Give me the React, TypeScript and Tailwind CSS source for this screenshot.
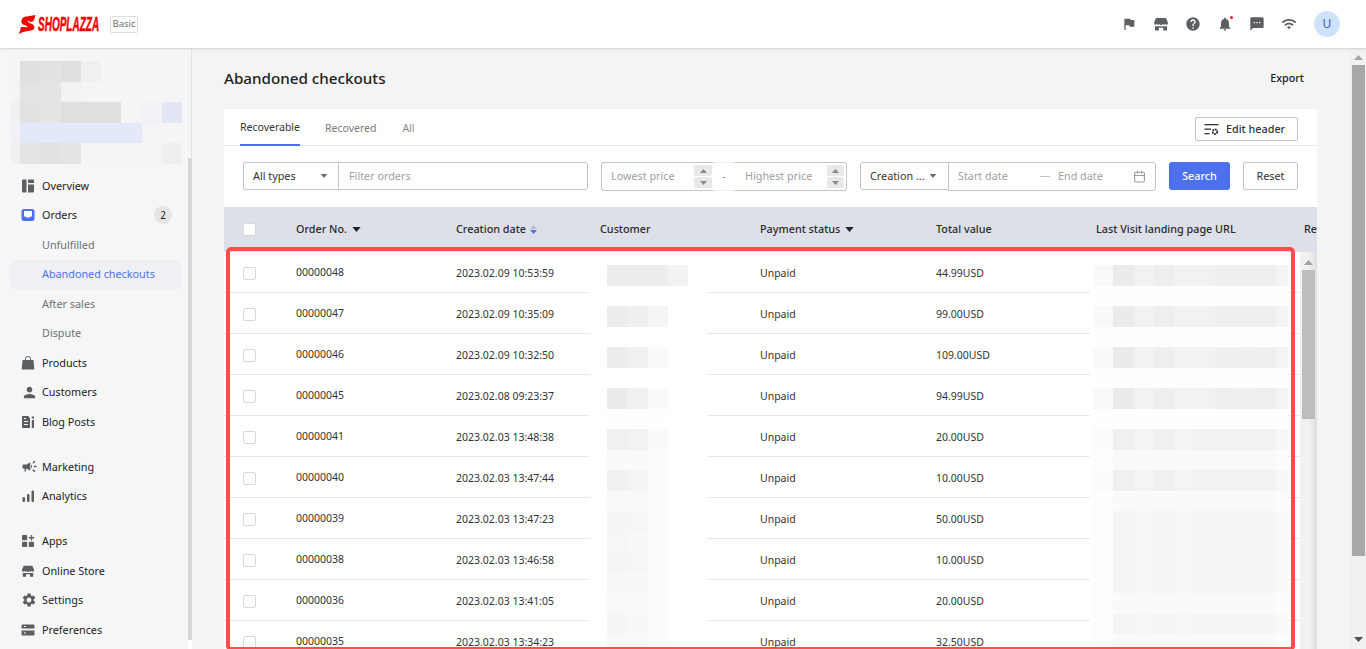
import { Calendar } from "lucide-react";
import { MdFlag, MdHelp, MdNotifications, MdSms, MdWifi, MdPerson, MdCampaign, MdSettings } from "react-icons/md";

const Store = ({ size = 16 }: { size?: number }) => (
  <svg width={size} height={size} viewBox="0 0 16 16" fill="currentColor">
    <path d="M3 2h10l1.800 4.200v1.600a1.400 1.400 0 0 1-2.700 0 1.400 1.400 0 0 1-2.700 0 1.400 1.400 0 0 1-2.800 0 1.400 1.400 0 0 1-2.700 0 1.400 1.400 0 0 1-2.700 0V6.200z" />
    <path d="M2 10.200h3.800V14.500H2zM10.200 10.200H14V14.500h-3.800zM5.800 10.200h4.400v1.600H5.800z" />
  </svg>
);
const Overview = () => (
  <svg width="14" height="14" viewBox="0 0 14 14" fill="currentColor">
    <path d="M1 1.500a1 1 0 0 1 1-1h3.500v13H2a1 1 0 0 1-1-1zM7 .5h5a1 1 0 0 1 1 1V4H7zM7 5.500h6v7a1 1 0 0 1-1 1H7z" />
  </svg>
);
const OrdersIcon = () => (
  <svg width="14" height="14" viewBox="0 0 14 14">
    <rect x="0.500" y="1" width="13" height="12" rx="2.500" fill="#4d71ee" />
    <path d="M3 3h8v5.500H9.500L8.500 9.500h-3L4.500 8.500H3z" fill="#fff" />
  </svg>
);
const Bag = () => (
  <svg width="14" height="14" viewBox="0 0 14 14" fill="currentColor">
    <path d="M1.500 4h11l.8 9.500H.7z" />
    <path d="M4.500 5V2.500a2.500 2 0 0 1 5 0V5" fill="none" stroke="currentColor" />
  </svg>
);
const Blog = () => (
  <svg width="14" height="14" viewBox="0 0 14 14" fill="currentColor">
    <path fillRule="evenodd" d="M1 1h6l2 2v10H1zM3 6v1h4V6zM3 9v1h4V9zM3 3v1h2V3z" />
    <path d="M10.800 5H13v8h-2.200zM10.800 1.500H13v2h-2.200z" />
  </svg>
);
const Bars = () => (
  <svg width="14" height="14" viewBox="0 0 14 14" fill="currentColor">
    <rect x="1.500" y="8" width="2.500" height="5" rx="1" />
    <rect x="6" y="5" width="2.500" height="8" rx="1" />
    <rect x="10.500" y="1.500" width="2.500" height="11.500" rx="1" />
  </svg>
);
const Apps = () => (
  <svg width="14" height="14" viewBox="0 0 14 14" fill="currentColor">
    <rect x="1" y="1" width="5.200" height="5.200" rx="1" />
    <rect x="1" y="7.800" width="5.200" height="5.200" rx="1" />
    <rect x="7.800" y="7.800" width="5.200" height="5.200" rx="1" />
    <path d="M9.800 1h1.400v2h2v1.400h-2v2H9.800v-2h-2V3h2z" />
  </svg>
);
const Prefs = () => (
  <svg width="14" height="14" viewBox="0 0 14 14" fill="currentColor">
    <path fillRule="evenodd" d="M1.500 1.500h11a1 1 0 0 1 1 1v3h-13v-3a1 1 0 0 1 1-1zM.5 7.500h13v4a1 1 0 0 1-1 1h-11a1 1 0 0 1-1-1z" />
    <path d="M3 3h2v1H3zM3 9.500h2v1H3z" fill="#f6f6f6" />
  </svg>
);
const EditIcon = () => (
  <svg width="15" height="13" viewBox="0 0 15 13" fill="#333">
    <rect x="0.500" y="1" width="14" height="1.300" />
    <rect x="0.500" y="5.500" width="6.500" height="1.300" />
    <rect x="0.500" y="10" width="5" height="1.300" />
    <circle cx="11" cy="8.700" r="2.300" fill="none" stroke="#333" strokeWidth="1.800" strokeDasharray="1.800 .6" />
  </svg>
);

const Caret = ({ className }: { className: string }) => (
  <svg width="10" height="6" viewBox="0 0 10 6" className={className} fill="currentColor">
    <path d="M0 0h10L5 6z" />
  </svg>
);
const Up = ({ className }: { className: string }) => (
  <svg width="9" height="5" viewBox="0 0 9 5" className={className} fill="currentColor">
    <path d="M4.500 0L9 5H0z" />
  </svg>
);
const Down = ({ className }: { className: string }) => (
  <svg width="9" height="5" viewBox="0 0 9 5" className={className} fill="currentColor">
    <path d="M0 0h9L4.500 5z" />
  </svg>
);

interface NavProps {
  icon?: JSX.Element;
  label: string;
  sub?: boolean;
  active?: boolean;
  badge?: string;
}

const navGroups: NavProps[][] = [
  [
    { icon: <Overview />, label: "Overview" },
    { icon: <OrdersIcon />, label: "Orders", badge: "2" },
    { label: "Unfulfilled", sub: true },
    { label: "Abandoned checkouts", sub: true, active: true },
    { label: "After sales", sub: true },
    { label: "Dispute", sub: true },
    { icon: <Bag />, label: "Products" },
    { icon: <MdPerson size={17} />, label: "Customers" },
    { icon: <Blog />, label: "Blog Posts" },
  ],
  [
    { icon: <MdCampaign size={17} />, label: "Marketing" },
    { icon: <Bars />, label: "Analytics" },
  ],
  [
    { icon: <Apps />, label: "Apps" },
    { icon: <Store size={14} />, label: "Online Store" },
    { icon: <MdSettings size={16} />, label: "Settings" },
    { icon: <Prefs />, label: "Preferences" },
  ],
];

const orders = [
  ["00000048", "2023.02.09 10:53:59", "44.99USD"],
  ["00000047", "2023.02.09 10:35:09", "99.00USD"],
  ["00000046", "2023.02.09 10:32:50", "109.00USD"],
  ["00000045", "2023.02.08 09:23:37", "94.99USD"],
  ["00000041", "2023.02.03 13:48:38", "20.00USD"],
  ["00000040", "2023.02.03 13:47:44", "10.00USD"],
  ["00000039", "2023.02.03 13:47:23", "50.00USD"],
  ["00000038", "2023.02.03 13:46:58", "10.00USD"],
  ["00000036", "2023.02.03 13:41:05", "20.00USD"],
  ["00000035", "2023.02.03 13:34:23", "32.50USD"],
];

// pixelated areas of the screenshot, one array per band of tiles
const sideTiles = [
  ["#f5f5f5", "#dfdfdf", "#e1e2e2", "#e0e0e0", "#f0f0f0", "#f5f5f5", "#f5f5f5", "#f5f5f5", "#f5f5f5"],
  ["#f5f5f5", "#e3e3e3", "#e4e4e4", "#f1f2f4", "#f5f5f5", "#f5f5f5", "#f5f5f5", "#f5f5f5", "#f5f5f5"],
  ["#f0f0f0", "#e2e2e2", "#e4e4e4", "#dfdfdf", "#dfdfdf", "#dfdfdf", "#f5f5f5", "#f2f2f6", "#e3e6f4"],
  ["#f0f2f8", "#e3e9f8", "#e3e9f8", "#e3e9f8", "#e3e9f8", "#e3e9f8", "#e3e9f8", "#f3f4f6", "#f5f5f5"],
  ["#f0f0f0", "#e4e4e4", "#e2e2e2", "#e4e4e4", "#f5f5f5", "#f5f5f5", "#f5f5f5", "#f5f5f5", "#efefef"],
];
const customerTiles = [
  ["#ececec", "#ededed", "#ededed", "#f3f3f3"],
  ["#fff", "#fff", "#fff"],
  ["#ececee", "#efefef", "#f5f5f5"],
  ["#fff", "#fff", "#fff"],
  ["#ececec", "#eff0f0", "#fafafa"],
  ["#fff", "#fff", "#fff"],
  ["#ebebeb", "#eff0f0", "#fafafa"],
  ["#fefefe", "#fefefe", "#fefefe"],
  ["#f0f0f0", "#f2f2f2", "#fafafa"],
  ["#fafafa", "#fafafa", "#fcfcfc"],
  ["#f1f1f1", "#f3f5f4", "#fbfcfb"],
  ["#f9f9f9", "#f9f9f9", "#fcfcfc"],
  ["#f5f5f5", "#f6f6f6", "#fcfcfc"],
  ["#f6f6f6", "#f8f8f8", "#fcfcfc"],
  ["#f5f5f5", "#f6f6f6", "#fcfcfc"],
  ["#f7f7f7", "#f8f8f8", "#fcfcfc"],
  ["#f9f9f9", "#f9f9f9", "#fcfcfc"],
  ["#f5f5f5", "#f7f8f7", "#fcfcfc"],
  ["#f9f9f9", "#f9f9f9", "#fcfcfc"],
];
const urlDark = ["#f9f9f9", "#ebebeb", "#f1f3f1", "#eeeeee", "#f1f2f4", "#f1f2f4", "#eeeeee", "#efefef", "#eeeeee", "#f4f4f4"];
const urlMid = ["#fbfbfb", "#f0f0f0", "#f3f5f4", "#f0f0f0", "#f3f4f6", "#f2f2f2", "#f2f2f2", "#f2f2f2", "#f2f2f2", "#f7f7f7"];
const urlFaint = ["#fdfdfd", "#f5f5f5", "#f7f7f7", "#f5f5f5", "#f6f6f6", "#f5f5f5", "#f5f5f5", "#f5f5f5", "#f5f5f5", "#f9f9f9"];
const urlPale = ["#fdfdfd", "#fafafa", "#fafafa", "#fafafa", "#fafafa", "#fafafa", "#fafafa", "#fafafa", "#fafafa", "#fcfcfc"];
const urlWhite = Array(10).fill("#fefefe");
const urlTiles = [
  urlDark, urlWhite, urlDark, urlWhite, urlDark, urlWhite, urlDark, urlWhite, urlMid, urlPale,
  urlMid, urlPale, urlFaint, urlFaint, urlFaint, urlFaint, urlPale, urlFaint, urlPale,
];

const Tiles = ({ bands, first = 20.300 }: { bands: string[][]; first?: number }) => (
  <div className="flex flex-col">
    {bands.map((band, i) => (
      <div key={i} className="flex h-[20.500px]">
        {band.map((color, j) => (
          <div
            key={j}
            className="shrink-0"
            style={{ backgroundColor: color, width: j === 0 ? first : j === 9 ? 12 : 20.300 }}
          />
        ))}
      </div>
    ))}
  </div>
);

const Sidebar = () => (
  <aside className="flex w-[192px] shrink-0 bg-[#f6f6f6]">
    <div className="w-[188px] shrink-0 pt-[13px]">
      <div className="mb-[7.500px] ml-[11px]">
        <Tiles bands={sideTiles} first={9} />
      </div>
      {navGroups.map((group, g) => (
        <div key={g} className="mb-[15.500px]">
          {group.map(({ icon, label, sub, active, badge }) => (
            <div
              key={label}
              className={`ml-[10px] mr-[7px] flex h-[29.500px] items-center rounded-[4px] pl-[11px] pr-[9px] ${active ? "bg-[#eff0f3]" : ""}`}
            >
              <span className="flex w-[21px] shrink-0 items-center text-[#5c5f62]">{icon}</span>
              <span className={active ? "text-[#4d71ee]" : sub ? "text-[#6d7175]" : "text-[#202223]"}>{label}</span>
              {badge && (
                <span className="ml-auto flex h-[18px] w-[18px] items-center justify-center rounded-full bg-[#e4e5e7] text-[10px] text-[#202223]">
                  {badge}
                </span>
              )}
            </div>
          ))}
        </div>
      ))}
    </div>
    <div className="flex w-[4px] shrink-0 flex-col">
      <div className="h-[110px] border-r border-[#e3e3e3]" />
      <div className="flex-1 bg-[#d5d7da]" />
      <div className="h-[9px] bg-white" />
    </div>
  </aside>
);

const columns = [
  { label: "Order No.", w: "w-[160px]", filter: true },
  { label: "Creation date", w: "w-[144px]", sort: true },
  { label: "Customer", w: "w-[160px]" },
  { label: "Payment status", w: "w-[176px]", filter: true },
  { label: "Total value", w: "w-[160px]" },
  { label: "Last Visit landing page URL", w: "w-[208px]" },
  { label: "Recovery", w: "w-[160px]" },
];

const OrdersTable = () => (
  <div className="flex min-h-0 flex-1 flex-col overflow-hidden">
    <div className="flex h-[45px] shrink-0 items-center bg-[#dee0e9] pb-[1px] font-medium text-[#2a2a2a]">
      <div className="flex w-[72px] shrink-0 pl-[19px]">
        <span className="h-[13px] w-[13px] rounded-[2px] border border-[#d9d9d9] bg-white" />
      </div>
      {columns.map(({ label, w, filter, sort }) => (
        <div key={label} className={`flex shrink-0 items-center gap-[5px] ${w}`}>
          <span className="whitespace-nowrap">{label}</span>
          {filter && <Caret className="h-[5px] w-[9px] text-[#222]" />}
          {sort && (
            <span className="ml-[-1px] flex flex-col gap-[1px]">
              <Up className="h-[4px] w-[7px] text-[#b9bdc9]" />
              <Down className="h-[4px] w-[7px] text-[#4d71ee]" />
            </span>
          )}
        </div>
      ))}
    </div>
    <div className="flex min-h-0 flex-1">
      <div className="relative w-[1076px] shrink-0 overflow-hidden">
        {orders.map(([no, date, total]) => (
          <div key={no} className="flex h-[41px] items-center border-b border-[#e9e9e9] pt-[4px] text-[10.500px] text-[#333]">
            <div className="mb-[2px] flex w-[72px] shrink-0 pl-[19px]">
              <span className="h-[13px] w-[13px] rounded-[2px] border border-[#d9d9d9] bg-white" />
            </div>
            <div className="mb-[2px] w-[160px] shrink-0">{no}</div>
            <div className="w-[304px] shrink-0">{date}</div>
            <div className="w-[176px] shrink-0">Unpaid</div>
            <div className="w-[160px] shrink-0">{total}</div>
          </div>
        ))}
        {/* redacted customer and url columns sit over the row lines */}
        <div className="absolute left-[366px] top-0 h-full w-[117px] bg-white pl-[17px] pt-[13px]">
          <Tiles bands={customerTiles} />
        </div>
        <div className="absolute left-[866px] top-0 h-full w-[197px] bg-white pl-[3px] pt-[13px]">
          <Tiles bands={urlTiles} />
        </div>
      </div>
      <div className="flex w-[17px] shrink-0 flex-col items-center bg-linear-to-r from-[#f1f1f1] via-[#f1f1f1] to-[#dedede] pt-[8px]">
        <Up className="h-[5px] w-[9px] text-[#a3a3a3]" />
        <div className="mt-[5px] h-[149px] w-[13px] bg-[#bdbdbd]" />
      </div>
    </div>
  </div>
);

const Filters = () => (
  <div className="flex h-[61px] shrink-0 items-start px-[19px] pt-[16px]">
    <div className="flex h-[28px] w-[96px] shrink-0 items-center justify-between rounded-l-[3px] border border-[#c4c4c4] pl-[9px] pr-[10px] text-[#333]">
      All types
      <Caret className="h-[4px] w-[8px] text-[#6b6b6b]" />
    </div>
    <div className="ml-[-1px] flex h-[28px] w-[250px] shrink-0 items-center rounded-r-[3px] border border-[#c4c4c4] pl-[10px] text-[#a0a0a0]">
      Filter orders
    </div>
    <div className="ml-[13px] flex h-[29px] w-[246px] shrink-0 items-center text-[#a0a0a0]">
      <div className="flex h-full w-[112px] items-center justify-between rounded-l-[3px] border-y border-l border-[#c4c4c4] pl-[9px] pr-[1px]">
        Lowest price
        <span className="flex flex-col gap-[1px]">
          <span className="flex h-[11px] w-[18px] items-center justify-center rounded-[2px] bg-[#e8e8e8]">
            <Up className="h-[4px] w-[7px] text-[#8a8a8a]" />
          </span>
          <span className="flex h-[11px] w-[18px] items-center justify-center rounded-[2px] bg-[#e8e8e8]">
            <Down className="h-[4px] w-[7px] text-[#8a8a8a]" />
          </span>
        </span>
      </div>
      <div className="flex h-full w-[22px] items-center justify-center border-y border-[#efefef]">-</div>
      <div className="flex h-full w-[112px] items-center justify-between rounded-r-[3px] border-y border-r border-[#c4c4c4] pl-[10px] pr-[2px]">
        Highest price
        <span className="flex flex-col gap-[1px]">
          <span className="flex h-[11px] w-[17px] items-center justify-center rounded-[2px] bg-[#e8e8e8]">
            <Up className="h-[4px] w-[7px] text-[#8a8a8a]" />
          </span>
          <span className="flex h-[11px] w-[17px] items-center justify-center rounded-[2px] bg-[#e8e8e8]">
            <Down className="h-[4px] w-[7px] text-[#8a8a8a]" />
          </span>
        </span>
      </div>
    </div>
    <div className="ml-[13px] flex h-[28px] w-[89px] shrink-0 items-center justify-between whitespace-nowrap rounded-l-[3px] border border-[#c4c4c4] pl-[9px] pr-[11px] text-[#333]">
      Creation ...
      <Caret className="h-[4px] w-[8px] text-[#6b6b6b]" />
    </div>
    <div className="ml-[-1px] flex h-[28.500px] w-[208px] shrink-0 items-center rounded-r-[3px] border border-[#c4c4c4] pl-[9px] text-[#a0a0a0]">
      <span className="w-[82px]">Start date</span>
      <span className="h-px w-[10px] bg-[#c4c4c4]" />
      <span className="ml-[8px] w-[75px]">End date</span>
      <Calendar size={13} className="text-[#9a9a9a]" />
    </div>
    <button className="ml-[13px] flex h-[28px] w-[61px] shrink-0 items-center justify-center rounded-[3px] bg-[#4d71ee] font-medium text-white">
      Search
    </button>
    <button className="ml-[13px] flex h-[28px] w-[55px] shrink-0 items-center justify-center rounded-[3px] border border-[#c4c4c4] text-[#333]">
      Reset
    </button>
  </div>
);

const PageScrollbar = () => (
  <div className="flex w-[16px] shrink-0 flex-col items-center bg-[#f1f1f1] pt-[7px]">
    <Up className="h-[5px] w-[9px] text-[#a3a3a3]" />
    <div className="mt-[5px] h-[491px] w-[13px] bg-[#a8a8a8]" />
    <Down className="mt-[81px] h-[5px] w-[9px] text-[#505050]" />
  </div>
);

const App = () => {
  return (
    <div className="relative flex h-[649px] w-[1366px] flex-col overflow-hidden bg-[#f4f4f4] font-['Noto_Sans','Open_Sans',sans-serif] text-[10.800px]">
      <header className="z-10 flex h-[48px] shrink-0 items-center bg-white pl-[19px] pr-[26px] shadow-[0_1px_2px_rgba(0,0,0,0.15)]">
        <svg width="17" height="19" viewBox="0 0 17 19" fill="#f40000">
          <path d="M16.500 0L15 5c-.3 1.200-2 2-4 2L9 5.300C8 7 10 8 13 9c3 1.400 3 4 1 6L4 17l-4 2 2-7h5c1 1 2 0 1-1C4 10 1 8 3 4c1-2 3-2.500 5-2.500z" />
        </svg>
        <span className="ml-[2px] w-[62px] origin-left scale-x-[0.5] whitespace-nowrap font-['Liberation_Sans',sans-serif] text-[20px] font-bold italic leading-none text-[#f40000] [-webkit-text-stroke:0.5px_#f40000]">
          SHOPLAZZA
        </span>
        <span className="ml-[10px] flex h-[17px] w-[28px] items-center justify-center rounded-[2px] border border-[#dcdcdc] text-[9.500px] text-[#6d7175]">
          Basic
        </span>
        <div className="ml-auto flex items-center gap-[16px] text-[#5c5f62]">
          <MdFlag size={16} />
          <Store />
          <MdHelp size={16} />
          <span className="relative">
            <MdNotifications size={16} />
            <span className="absolute right-0 top-0 h-[3px] w-[3px] rounded-full bg-[#f02020]" />
          </span>
          <MdSms size={16} />
          <MdWifi size={16} />
        </div>
        <span className="ml-[17px] flex h-[26px] w-[26px] items-center justify-center rounded-full bg-[#cfe2fb] text-[12px] text-[#3f5db5]">
          U
        </span>
      </header>

      <div className="flex min-h-0 flex-1">
        <Sidebar />
        <main className="flex min-w-0 flex-1 flex-col pl-[32px] pr-[33px]">
          <div className="flex h-[61px] shrink-0 items-center justify-between pr-[13px]">
            <h1 className="text-[15.200px] font-medium text-[#202223]">Abandoned checkouts</h1>
            <span className="font-medium text-[#202223]">Export</span>
          </div>
          <section className="flex min-h-0 flex-1 flex-col bg-white">
            <div className="flex h-[37px] shrink-0 items-start justify-between border-b border-[#e6e6e6] pl-[16px] pr-[19px]">
              <div className="flex h-[37px] gap-[25px] text-[10.500px]">
                <span className="flex h-[37px] items-center border-b-2 border-[#4d71ee] pt-[2px] text-[#333]">Recoverable</span>
                <span className="flex h-[37px] items-center pt-[2px] text-[#7a7a7a]">Recovered</span>
                <span className="flex h-[37px] items-center pl-[1px] pt-[2px] text-[#8a8a8a]">All</span>
              </div>
              <button className="mt-[8px] flex h-[24px] w-[103px] items-center gap-[7px] rounded-[2px] border border-[#c4c4c4] pl-[8px] font-medium text-[#333]">
                <EditIcon />
                Edit header
              </button>
            </div>
            <Filters />
            <OrdersTable />
          </section>
        </main>
        <PageScrollbar />
      </div>

      {/* red highlight drawn over the table */}
      <div className="absolute left-[226px] top-[247px] h-[404px] w-[1069px] rounded-[5px] border-4 border-[#ff4d4d]" />
    </div>
  );
};

export default App;
